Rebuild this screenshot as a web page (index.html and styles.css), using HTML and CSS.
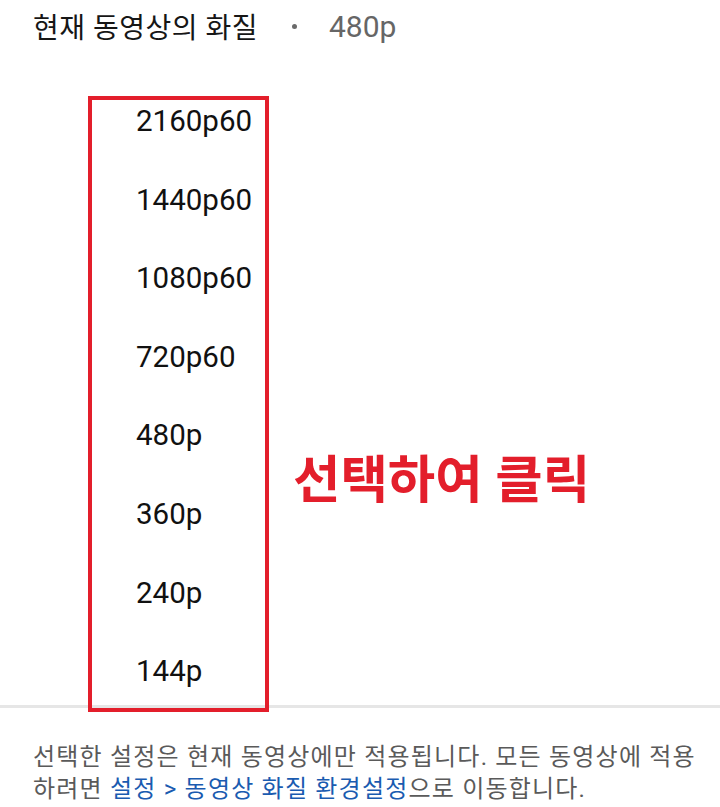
FILE: index.html
```html
<!DOCTYPE html>
<html lang="ko">
<head>
<meta charset="utf-8">
<link rel="stylesheet" href="styles.css">
</head>
<body>
<div class="page">
  <header class="current">
    <span class="label">현재 동영상의 화질</span>
    <span class="dot"></span>
    <span class="value">480p</span>
  </header>
  <ul class="quality-list">
    <li>2160p60</li>
    <li>1440p60</li>
    <li>1080p60</li>
    <li>720p60</li>
    <li>480p</li>
    <li>360p</li>
    <li>240p</li>
    <li>144p</li>
  </ul>
  <div class="divider"></div>
  <p class="note"><span>선택한 설정은 현재 동영상에만 적용됩니다. 모든 동영상에 적용</span> <span>하려면</span> <span class="link">설정 &gt; 동영상 화질 환경설정</span><span>으로 이동합니다.</span></p>
  <div class="highlight-box"></div>
  <div class="callout">선택하여 클릭</div>
</div>
</body>
</html>
```

FILE: styles.css
```css
html, body {
  margin: 0;
  padding: 0;
  background: #ffffff;
}
body {
  font-family: "Roboto", "Noto Sans CJK KR", sans-serif;
  color: #111111;
}
.page {
  position: relative;
  width: 720px;
  height: 807px;
  overflow: hidden;
}
.current {
  display: flex;
  align-items: center;
  height: 52px;
  padding-left: 33px;
}
.current .label {
  font-size: 28px;
  letter-spacing: 0.5px;
  color: #161616;
}
.current .dot {
  width: 5px;
  height: 5px;
  border-radius: 50%;
  background: #6a6a6a;
  margin-left: 34px;
  margin-right: 32px;
}
.current .value {
  font-size: 30px;
  color: #666666;
}
.quality-list {
  list-style: none;
  margin: 25px 0 0 0;
  padding: 0 0 0 136px;
}
.quality-list li {
  box-sizing: border-box;
  height: 78.6px;
  padding-top: 29px;
  line-height: 30px;
  font-size: 29.5px;
  color: #111111;
}
.divider {
  height: 3px;
  background: #e6e6e6;
  margin-top: -1px;
}
.note {
  margin: 0;
  padding: 33px 20px 0 33px;
  font-size: 24px;
  line-height: 32px;
  letter-spacing: 1.2px;
  color: #5a5a5a;
}
.note .link {
  color: #1a5bb0;
}
.highlight-box {
  position: absolute;
  left: 88px;
  top: 96px;
  width: 173px;
  height: 608px;
  border: 4px solid #e31e2b;
}
.callout {
  position: absolute;
  left: 293px;
  top: 455px;
  font-size: 51.5px;
  line-height: 1;
  font-weight: 700;
  color: #e31e2b;
  white-space: nowrap;
}
```
